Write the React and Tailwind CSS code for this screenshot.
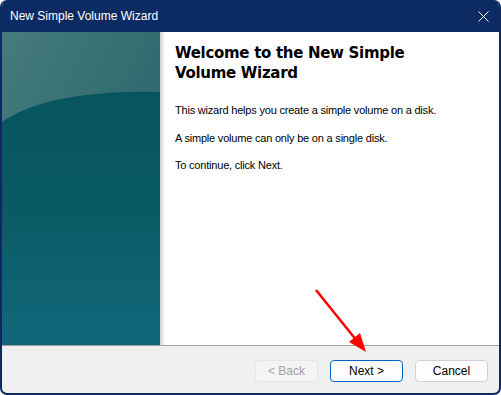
import React from 'react';

// left-side artwork of the wizard (teal panel with the soft curve)
const SidePanel = () => (
  <div className="relative w-[158px] h-full bg-[#0b5a64] overflow-hidden">
    <svg className="absolute inset-0" width="158" height="314" viewBox="0 0 158 314" preserveAspectRatio="none">
      <defs>
        <linearGradient id="top" x1="0" y1="0" x2="1" y2="1">
          <stop offset="0" stopColor="#467b7b" />
          <stop offset="1" stopColor="#1f5f67" />
        </linearGradient>
        <linearGradient id="body" x1="0" y1="0" x2="0" y2="1">
          <stop offset="0" stopColor="#07545f" />
          <stop offset="0.5" stopColor="#0a5b66" />
          <stop offset="1" stopColor="#12687b" />
        </linearGradient>
      </defs>
      <rect width="158" height="314" fill="url(#top)" />
      <path d="M0 90 C 30 68, 90 58, 158 60 L158 314 L0 314 Z" fill="url(#body)" />
    </svg>
  </div>
);

const Button = ({ children, disabled, primary }) => {
  let cls = 'w-[73px] border-[#d0d0d0] bg-[#fdfdfd] text-black';
  if (disabled) cls = 'w-[63px] border-[#e5e5e5] bg-[#f5f5f5] text-[#a0a0a0]';
  if (primary) cls = 'w-[73px] border-[#0067c0] bg-[#fdfdfd] text-black';
  return (
    <button
      className={`h-[22px] rounded-[4px] border text-[12px] leading-none ${cls}`}
      style={{ fontFamily: '"Liberation Sans", Arial, sans-serif' }}
    >
      {children}
    </button>
  );
};

export default function App() {
  return (
    <div className="w-[501px] h-[395px] bg-white">
      <div className="relative w-[501px] h-[395px] rounded-[7px] border-2 border-[#0d2a5e] border-t-0 bg-[#f0f0f0] overflow-hidden flex flex-col">
        {/* title bar */}
        <div className="h-[32px] bg-[#0d2b63] flex items-center justify-between pl-[8px] pr-[10px] text-white shrink-0">
          <span className="text-[12px]" style={{ fontFamily: '"Liberation Sans", Arial, sans-serif' }}>
            New Simple Volume Wizard
          </span>
          <svg width="11" height="11" viewBox="0 0 11 11">
            <path d="M0.5 0.5 L10.5 10.5 M10.5 0.5 L0.5 10.5" stroke="#ffffff" strokeWidth="1" />
          </svg>
        </div>

        {/* main body */}
        <div className="flex h-[314px] bg-white border-b border-[#a0a0a0]">
          <SidePanel />
          <div className="w-[4px] h-full bg-gradient-to-r from-[#cfcfcf] to-[#f4f4f4]" />
          <div className="flex-1 pl-[11px] pt-[11px]" style={{ fontFamily: '"Liberation Sans", Arial, sans-serif' }}>
            <h1
              className="text-[15px] font-bold leading-[20px] tracking-[-0.3px] text-black"
              style={{ fontFamily: '"DejaVu Sans", Verdana, sans-serif' }}
            >
              Welcome to the New Simple
              <br />
              Volume Wizard
            </h1>
            <p className="mt-[20px] text-[11px] leading-[14px] tracking-[-0.2px] text-black">
              This wizard helps you create a simple volume on a disk.
            </p>
            <p className="mt-[14px] text-[11px] leading-[14px] tracking-[-0.2px] text-black">
              A simple volume can only be on a single disk.
            </p>
            <p className="mt-[13px] text-[11px] leading-[14px] tracking-[-0.2px] text-black">
              To continue, click Next.
            </p>
          </div>
        </div>

        {/* footer buttons */}
        <div className="flex-1 flex items-start justify-end pt-[14px] pr-[11px]">
          <Button disabled>&lt; Back</Button>
          <div className="w-[12px]" />
          <Button primary>Next &gt;</Button>
          <div className="w-[12px]" />
          <Button>Cancel</Button>
        </div>

        {/* red annotation arrow */}
        <svg className="absolute left-0 top-0 pointer-events-none" width="501" height="395">
          <line x1="314" y1="290" x2="355" y2="341" stroke="#ff0000" strokeWidth="2.5" />
          <polygon points="364,352 347,342 358,333" fill="#ff0000" />
        </svg>
      </div>
    </div>
  );
}
